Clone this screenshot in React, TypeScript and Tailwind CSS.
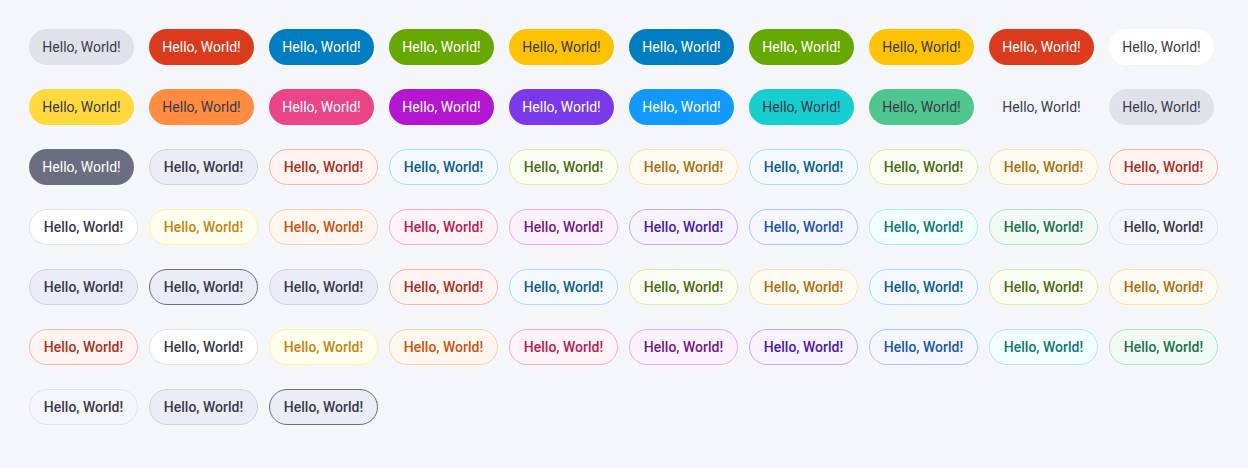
import React from "react";

type Tag = { cls: string; bold?: boolean };

const dark = "text-[#393a4b]";

// solid tags (regular weight)
const solid = {
  gray: `bg-[#e0e2ea] ${dark}`,
  red: "bg-[#dc3a1c] text-white",
  blue: "bg-[#007dc1] text-white",
  green: "bg-[#66a800] text-white",
  yellow: `bg-[#ffc200] ${dark}`,
  white: `bg-white ${dark}`,
  lemon: `bg-[#ffd93d] ${dark}`,
  orange: `bg-[#ff8c40] ${dark}`,
  pink: "bg-[#ea4586] text-white",
  purple: "bg-[#b315d0] text-white",
  violet: "bg-[#7a3aeb] text-white",
  sky: "bg-[#1199ff] text-white",
  cyan: `bg-[#16cdd0] ${dark}`,
  teal: `bg-[#4fc68f] ${dark}`,
  clear: `bg-transparent ${dark}`,
  slate: "bg-[#6b6e80] text-white",
};

// outlined tags (semibold)
const soft = {
  gray: `bg-[#eaedf5] border-[#cfd2dc] ${dark}`,
  grayDark: `bg-[#eaedf5] border-[#6b6e80] ${dark}`,
  light: `bg-[#f5f6f9] border-[#e1e3ea] ${dark}`,
  white: `bg-white border-[#e0e2ea] ${dark}`,
  red: "bg-[#fff4f2] border-[#f9b5a6] text-[#a8321e]",
  blue: "bg-[#f3f9ff] border-[#a7dcff] text-[#0d5e8e]",
  green: "bg-[#fbfff3] border-[#d5ef9f] text-[#4b6a14]",
  yellow: "bg-[#fffbf2] border-[#ffe39a] text-[#a8720f]",
  lemon: "bg-[#fffff0] border-[#fff3a0] text-[#c48510]",
  orange: "bg-[#fff6f0] border-[#ffcda8] text-[#c4560f]",
  pink: "bg-[#fff3f8] border-[#f4abc8] text-[#b31d56]",
  purple: "bg-[#fcf2ff] border-[#e9a8f5] text-[#701a80]",
  violet: "bg-[#f6f2ff] border-[#c5a8f5] text-[#4b1aa8]",
  indigo: "bg-[#f4f7ff] border-[#b0c2f5] text-[#1d56a8]",
  cyan: "bg-[#f1ffff] border-[#aeeaee] text-[#137575]",
  teal: "bg-[#f0fbf4] border-[#b4e0c4] text-[#237050]",
};

const s = (cls: string): Tag => ({ cls });
const o = (cls: string): Tag => ({ cls, bold: true });

const tags: Tag[] = [
  s(solid.gray), s(solid.red), s(solid.blue), s(solid.green), s(solid.yellow),
  s(solid.blue), s(solid.green), s(solid.yellow), s(solid.red), s(solid.white),

  s(solid.lemon), s(solid.orange), s(solid.pink), s(solid.purple), s(solid.violet),
  s(solid.sky), s(solid.cyan), s(solid.teal), s(solid.clear), s(solid.gray),

  s(solid.slate), o(soft.gray), o(soft.red), o(soft.blue), o(soft.green),
  o(soft.yellow), o(soft.blue), o(soft.green), o(soft.yellow), o(soft.red),

  o(soft.white), o(soft.lemon), o(soft.orange), o(soft.pink), o(soft.purple),
  o(soft.violet), o(soft.indigo), o(soft.cyan), o(soft.teal), o(soft.light),

  o(soft.gray), o(soft.grayDark), o(soft.gray), o(soft.red), o(soft.blue),
  o(soft.green), o(soft.yellow), o(soft.blue), o(soft.green), o(soft.yellow),

  o(soft.red), o(soft.white), o(soft.lemon), o(soft.orange), o(soft.pink),
  o(soft.purple), o(soft.violet), o(soft.indigo), o(soft.cyan), o(soft.teal),

  o(soft.light), o(soft.gray), o(soft.grayDark),
];

export default function App() {
  return (
    <div
      className="min-h-[468px] w-full bg-[#f5f6fa] pt-[29px] pl-[29px]"
      style={{ fontFamily: '"Source Sans Pro", Roboto, "Noto Sans", sans-serif' }}
    >
      <div className="grid grid-cols-[repeat(10,120px)] gap-y-6">
        {tags.map((t, i) => (
          <div key={i}>
            <span
              className={`inline-flex h-9 items-center justify-center rounded-full text-[14px] leading-none whitespace-nowrap ${
                t.bold ? "w-[109px] border font-medium" : "w-[105px] font-normal"
              } ${t.cls}`}
            >
              Hello, World!
            </span>
          </div>
        ))}
      </div>
    </div>
  );
}
